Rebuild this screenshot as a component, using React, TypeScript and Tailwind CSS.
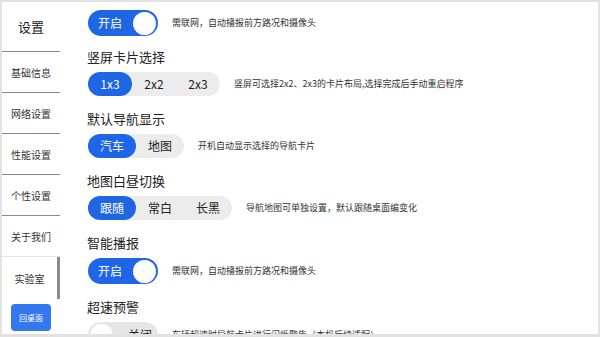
import type { ReactNode } from "react";

const menu = ["基础信息", "网络设置", "性能设置", "个性设置", "关于我们"];

const Toggle = ({ on }: { on: boolean }) => {
  if (on) {
    return (
      <div className="w-[70px] h-[26px] shrink-0 rounded-full bg-[#1e66e6] flex items-center justify-between pl-[10px] pr-[2px]">
        <span className="text-white text-[12px] leading-none">开启</span>
        <span className="w-[23px] h-[23px] rounded-full bg-white" />
      </div>
    );
  }
  return (
    <div className="w-[70px] h-[26px] shrink-0 rounded-full bg-[#e6e6e6] flex items-center justify-between pl-[2px] pr-[6px]">
      <span className="w-[23px] h-[23px] rounded-full bg-white" />
      <span className="text-[#222] text-[12px] leading-none">关闭</span>
    </div>
  );
};

const Segment = ({
  options,
  width,
}: {
  options: string[];
  width: string;
}) => (
  <div className="flex h-6 shrink-0 rounded-full bg-[#ececec]">
    {options.map((o, i) => (
      <div
        key={o}
        className={
          i === 0
            ? `${width} h-6 rounded-full bg-[#1e66e6] text-white flex items-center justify-center text-[12px]`
            : `${width} h-6 rounded-full text-[#222] flex items-center justify-center text-[12px]`
        }
      >
        {o}
      </div>
    ))}
  </div>
);

const Row = ({ children, desc }: { children: ReactNode; desc: string }) => (
  <div className="flex items-center gap-[14px]">
    {children}
    <span className="text-[9px] text-[#333] whitespace-nowrap">{desc}</span>
  </div>
);

const Section = ({
  title,
  first,
  children,
}: {
  title: string;
  first?: boolean;
  children: ReactNode;
}) => (
  <div className={first ? "mt-[11px]" : "mt-[13px]"}>
    <div className="h-5 leading-5 text-[13px] text-[#222] -ml-[1px]">{title}</div>
    <div className="mt-[5px]">{children}</div>
  </div>
);

export default function App() {
  return (
    <div
      className="w-[600px] h-[337px] overflow-hidden bg-white flex border-2 border-b-[3px] border-[#e2e2e2]"
      style={{ fontFamily: '"Noto Sans CJK SC", "Noto Sans", sans-serif' }}
    >
      {/* sidebar */}
      <div className="w-[58px] shrink-0 flex flex-col">
        <div className="h-[50px] flex items-center justify-center text-[13px] text-[#222] border-b border-[#8a8a8a]">
          设置
        </div>
        {menu.map((m, i) => (
          <div
            key={m}
            className={
              i === menu.length - 1
                ? "h-[41px] flex items-center justify-center text-[10px] text-[#333] border-b border-[#e4e4e4]"
                : "h-[41px] flex items-center justify-center text-[10px] text-[#333] border-b border-[#8a8a8a]"
            }
          >
            {m}
          </div>
        ))}
        <div className="h-[42px] flex items-center justify-center text-[10px] text-[#333] border-r-[3px] border-[#8c8c8c]">
          实验室
        </div>
        <div className="flex justify-center pt-[5px]">
          <div className="w-10 h-[27px] rounded bg-[#3478f0] text-white text-[8px] flex items-center justify-center">
            回桌面
          </div>
        </div>
      </div>

      {/* content */}
      <div className="flex-1 pl-[28px] pt-[8px]">
        <Row desc="需联网，自动播报前方路况和摄像头">
          <Toggle on />
        </Row>
        <Section title="竖屏卡片选择" first>
          <Row desc="竖屏可选择2x2、2x3的卡片布局,选择完成后手动重启程序">
            <Segment options={["1x3", "2x2", "2x3"]} width="w-[44px]" />
          </Row>
        </Section>
        <Section title="默认导航显示">
          <Row desc="开机自动显示选择的导航卡片">
            <Segment options={["汽车", "地图"]} width="w-[48px]" />
          </Row>
        </Section>
        <Section title="地图白昼切换">
          <Row desc="导航地图可单独设置，默认跟随桌面编变化">
            <Segment options={["跟随", "常白", "长黑"]} width="w-[48px]" />
          </Row>
        </Section>
        <Section title="智能播报">
          <Row desc="需联网，自动播报前方路况和摄像头">
            <Toggle on />
          </Row>
        </Section>
        <Section title="超速预警">
          <Row desc="车辆超速时导航卡片进行闪烁警告（本机后续适配）">
            <Toggle on={false} />
          </Row>
        </Section>
      </div>
    </div>
  );
}
